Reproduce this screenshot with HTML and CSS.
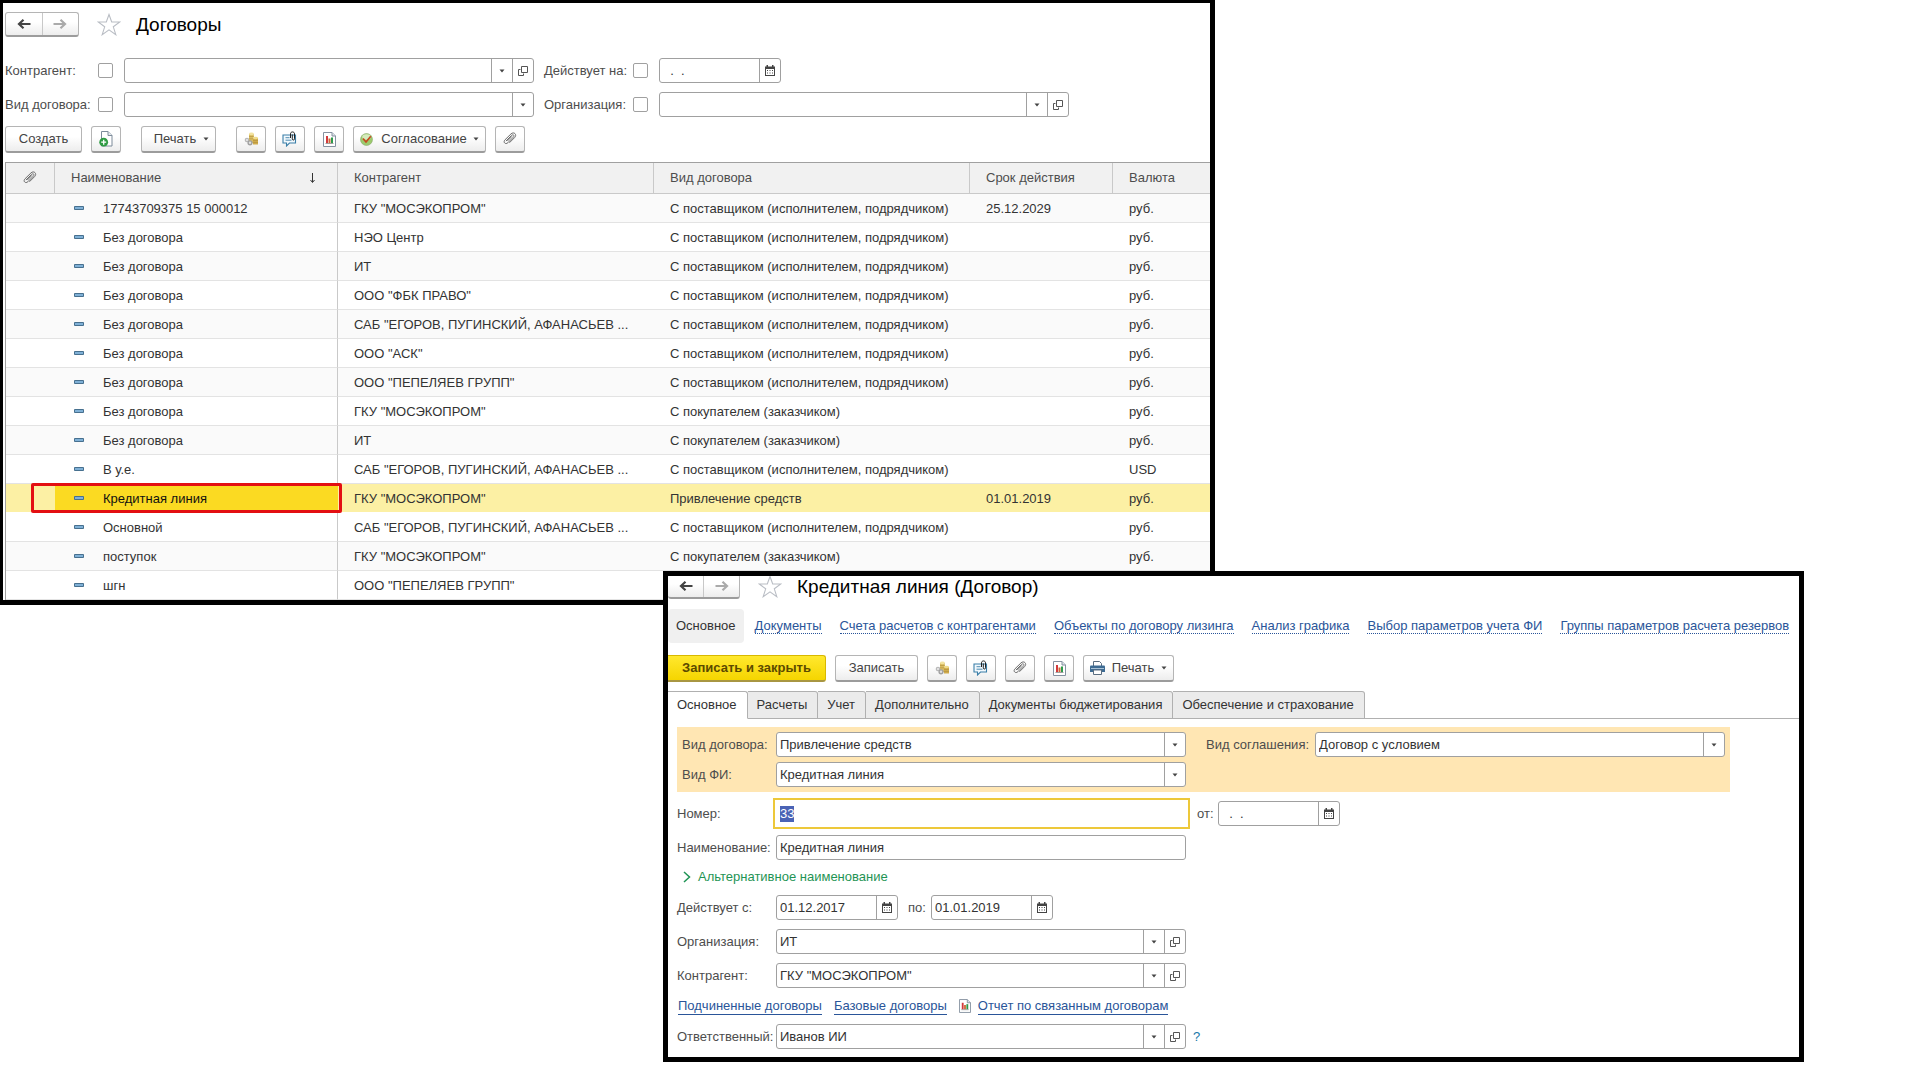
FILE: index.html
```html
<!DOCTYPE html>
<html lang="ru">
<head>
<meta charset="utf-8">
<title>Договоры</title>
<link rel="stylesheet" href="styles.css">
</head>
<body>
<svg class="sprite" aria-hidden="true">
  <symbol id="i-back" viewBox="0 0 14 10"><path d="M13.5 5H3M6.5 .8 2 5l4.500 4.200" fill="none" stroke="currentColor" stroke-width="2.200"/></symbol>
  <symbol id="i-fwd" viewBox="0 0 14 10"><path d="M.5 5H11M7.500 .8 12 5 7.500 9.200" fill="none" stroke="currentColor" stroke-width="2.200"/></symbol>
  <symbol id="i-star" viewBox="0 0 24 23"><path d="M12 1.500 14.700 9h8.100l-6.500 4.800 2.500 7.900L12 16.900l-6.800 4.800 2.500-7.900L1.200 9h8.100z" fill="none" stroke="#b9bdc4" stroke-width="1.100"/></symbol>
  <symbol id="i-caret" viewBox="0 0 6 4"><path d="M.5 .5h5L3 3.500z" fill="#444"/></symbol>
  <symbol id="i-open" viewBox="0 0 10 10"><path d="M3.500 .5h6v6h-6zM2.500 3.500h-2v6h5V7.500" fill="none" stroke="#555"/></symbol>
  <symbol id="i-cal" viewBox="0 0 10 11"><path d="M0 1.500h1.500V0H3v1.500h4V0h1.500v1.500H10V11H0z" fill="#444"/><path d="M1 4h8v6H1z" fill="#fff"/><path d="M2 5h1v1H2zM4.500 5h1v1h-1zM7 5h1v1H7zM2 7.500h1v1H2zM4.500 7.500h1v1h-1zM7 7.500h1v1H7z" fill="#444"/></symbol>
  <symbol id="i-clip" viewBox="0 0 14 14"><path d="M3.200 8.800 8.600 3.400c1.600-1.500 3.300.2 1.800 1.700l-5.500 5.600c-2.400 2.300-5.200-.5-2.900-2.900L7.900 2c3-2.900 6.600.7 3.700 3.600L6.700 10.500M4.700 8.700l4-4.100" fill="none" stroke="#6b6b6b" stroke-width="1" stroke-linecap="round"/></symbol>
  <symbol id="i-newdoc" viewBox="0 0 14 16"><path d="M2.500 .5h6.500l4 4v10.500H2.500z" fill="#fff" stroke="#7c8b9a"/><path d="M9 .5v4h4" fill="#e6ebef" stroke="#7c8b9a"/><circle cx="4.700" cy="11.200" r="4.400" fill="#2f9b43"/><path d="M4.700 8.700v5M2.200 11.200h5" stroke="#fff" stroke-width="1.300"/></symbol>
  <symbol id="i-coins" viewBox="0 0 15 14"><path d="M5 1.800h4.800V11H5z" fill="#d9bd62"/><ellipse cx="7.400" cy="1.900" rx="2.400" ry="1.300" fill="#f3e3a0"/><path d="M9 6h5v6.500H9z" fill="#cfab4c"/><ellipse cx="11.500" cy="6" rx="2.500" ry="1.300" fill="#f0dc8c"/><path d="M5 4.500h4.800M5 6.800h4M9 8.500h5M9 10.500h5" stroke="#b08f3c" stroke-width=".6"/><circle cx="3" cy="8" r="2.300" fill="#b9b9b9"/><circle cx="6" cy="10.800" r="2.600" fill="#a0a0a0"/><circle cx="6" cy="10.800" r="1.200" fill="#e0e0e0"/><circle cx="3" cy="8" r="1" fill="#eee"/></symbol>
  <symbol id="i-chat" viewBox="0 0 16 16"><path d="M1 4h12.500v8H7.500L4.500 15v-3H1z" fill="#f2f9fd" stroke="#3b7fa8" stroke-width="1.100"/><path d="M3.500 6.700h4M3.500 9.200h6" stroke="#3b7fa8" stroke-width=".9"/><path d="M8.500 7V2.800c0-2.500 4-2.500 4 0v5c0 1.700-2.200 1.700-2.200 0V3.500" fill="none" stroke="#222"/></symbol>
  <symbol id="i-report" viewBox="0 0 13 15"><path d="M.5 .5h8.500l3.500 3.500v10.500H.5z" fill="#fff" stroke="#8591a0"/><path d="M9 .5V4h3.500" fill="#dfe5ea" stroke="#8591a0"/><path d="M3 4h2v7H3z" fill="#d2393c"/><path d="M5.500 6.500h2V11h-2z" fill="#cf6a3a"/><path d="M8 5.500h2V11H8z" fill="#2c9a4b"/><path d="M2.500 11.500h8" stroke="#777" stroke-width=".7"/></symbol>
  <symbol id="i-ok" viewBox="0 0 13 13"><circle cx="6.500" cy="6.500" r="6" fill="#9ccb6d" stroke="#8aa86d" stroke-width=".6"/><ellipse cx="6.500" cy="4" rx="4.300" ry="2.700" fill="#d5ebbd"/><path d="M3 5.500 6 9 10.800 3.200" fill="none" stroke="#c5481f" stroke-width="1.700"/></symbol>
  <symbol id="i-print" viewBox="0 0 15 14"><path d="M3.500 5V.5h6l2 2V5" fill="#fff" stroke="#5a6d80"/><path d="M1 4.500h13q1 0 1 1V11H0V5.500q0-1 1-1z" fill="#3d6b93"/><path d="M1 7.500h13" stroke="#a9c3d8"/><path d="M3.500 9h8v4.500h-8z" fill="#fff" stroke="#5a6d80"/></symbol>
  <symbol id="i-item" viewBox="0 0 10 4"><path d="M.5 .5h9v3h-9z" fill="#7fb0d6" stroke="#47708f"/></symbol>
  <symbol id="i-sort" viewBox="0 0 7 11"><path d="M3.500 0v9M1.500 7l2 2.500 2-2.500" fill="none" stroke="#333"/></symbol>
  <symbol id="i-chev" viewBox="0 0 8 12"><path d="M1 1l5.500 5L1 11" fill="none" stroke="#1f9455" stroke-width="1.500"/></symbol>
</svg>

<main class="desktop">
  <section class="window window-list">
    <header class="titlebar">
      <div class="history">
        <button type="button" aria-label="Назад"><svg width="14" height="10"><use href="#i-back"/></svg></button>
        <button type="button" aria-label="Вперед" disabled><svg width="14" height="10"><use href="#i-fwd"/></svg></button>
      </div>
      <svg class="star" width="24" height="23"><use href="#i-star"/></svg>
      <h1>Договоры</h1>
    </header>

    <form class="filters">
      <label for="f-agent">Контрагент:</label>
      <input type="checkbox" aria-label="Отбор по контрагенту">
      <div class="field"><select id="f-agent"><option></option></select><span class="cell"><svg width="6" height="4"><use href="#i-caret"/></svg></span><button type="button" class="cell" aria-label="Открыть"><svg width="10" height="10"><use href="#i-open"/></svg></button></div>
      <label for="f-date">Действует на:</label>
      <input type="checkbox" aria-label="Отбор по дате">
      <div class="field date"><input id="f-date" type="text" value="  .  ."><button type="button" class="cell" aria-label="Календарь"><svg width="10" height="11"><use href="#i-cal"/></svg></button></div>

      <label for="f-kind">Вид договора:</label>
      <input type="checkbox" aria-label="Отбор по виду договора">
      <div class="field"><select id="f-kind"><option></option></select><span class="cell"><svg width="6" height="4"><use href="#i-caret"/></svg></span></div>
      <label for="f-org">Организация:</label>
      <input type="checkbox" aria-label="Отбор по организации">
      <div class="field"><select id="f-org"><option></option></select><span class="cell"><svg width="6" height="4"><use href="#i-caret"/></svg></span><button type="button" class="cell" aria-label="Открыть"><svg width="10" height="10"><use href="#i-open"/></svg></button></div>
    </form>

    <div class="toolbar">
      <button type="button" class="btn btn-create">Создать</button>
      <button type="button" class="btn icon gap-after" aria-label="Создать копированием"><svg width="14" height="16"><use href="#i-newdoc"/></svg></button>
      <button type="button" class="btn btn-menu gap-after">Печать<svg width="6" height="4"><use href="#i-caret"/></svg></button>
      <button type="button" class="btn icon" aria-label="Расчеты"><svg width="15" height="14"><use href="#i-coins"/></svg></button>
      <button type="button" class="btn icon" aria-label="Обсуждение"><svg width="16" height="16"><use href="#i-chat"/></svg></button>
      <button type="button" class="btn icon" aria-label="Отчет"><svg width="13" height="15"><use href="#i-report"/></svg></button>
      <button type="button" class="btn btn-approve"><svg width="13" height="13"><use href="#i-ok"/></svg><span>Согласование</span><svg width="6" height="4"><use href="#i-caret"/></svg></button>
      <button type="button" class="btn icon" aria-label="Файлы"><svg width="14" height="14"><use href="#i-clip"/></svg></button>
    </div>

    <table class="grid">
      <colgroup><col class="c-clip"><col class="c-name"><col class="c-agent"><col class="c-kind"><col class="c-term"><col></colgroup>
      <thead>
        <tr><th class="clip"><svg width="14" height="14"><use href="#i-clip"/></svg></th><th><div class="sorted">Наименование<svg width="7" height="11"><use href="#i-sort"/></svg></div></th><th>Контрагент</th><th>Вид договора</th><th>Срок действия</th><th>Валюта</th></tr>
      </thead>
      <tbody>
        <tr><td></td><td class="name"><svg width="10" height="4"><use href="#i-item"/></svg>17743709375 15 000012</td><td>ГКУ "МОСЭКОПРОМ"</td><td>С поставщиком (исполнителем, подрядчиком)</td><td>25.12.2029</td><td>руб.</td></tr>
        <tr><td></td><td class="name"><svg width="10" height="4"><use href="#i-item"/></svg>Без договора</td><td>НЭО Центр</td><td>С поставщиком (исполнителем, подрядчиком)</td><td></td><td>руб.</td></tr>
        <tr><td></td><td class="name"><svg width="10" height="4"><use href="#i-item"/></svg>Без договора</td><td>ИТ</td><td>С поставщиком (исполнителем, подрядчиком)</td><td></td><td>руб.</td></tr>
        <tr><td></td><td class="name"><svg width="10" height="4"><use href="#i-item"/></svg>Без договора</td><td>ООО "ФБК ПРАВО"</td><td>С поставщиком (исполнителем, подрядчиком)</td><td></td><td>руб.</td></tr>
        <tr><td></td><td class="name"><svg width="10" height="4"><use href="#i-item"/></svg>Без договора</td><td>САБ "ЕГОРОВ, ПУГИНСКИЙ, АФАНАСЬЕВ ...</td><td>С поставщиком (исполнителем, подрядчиком)</td><td></td><td>руб.</td></tr>
        <tr><td></td><td class="name"><svg width="10" height="4"><use href="#i-item"/></svg>Без договора</td><td>ООО "АСК"</td><td>С поставщиком (исполнителем, подрядчиком)</td><td></td><td>руб.</td></tr>
        <tr><td></td><td class="name"><svg width="10" height="4"><use href="#i-item"/></svg>Без договора</td><td>ООО "ПЕПЕЛЯЕВ ГРУПП"</td><td>С поставщиком (исполнителем, подрядчиком)</td><td></td><td>руб.</td></tr>
        <tr><td></td><td class="name"><svg width="10" height="4"><use href="#i-item"/></svg>Без договора</td><td>ГКУ "МОСЭКОПРОМ"</td><td>С покупателем (заказчиком)</td><td></td><td>руб.</td></tr>
        <tr><td></td><td class="name"><svg width="10" height="4"><use href="#i-item"/></svg>Без договора</td><td>ИТ</td><td>С покупателем (заказчиком)</td><td></td><td>руб.</td></tr>
        <tr><td></td><td class="name"><svg width="10" height="4"><use href="#i-item"/></svg>В у.е.</td><td>САБ "ЕГОРОВ, ПУГИНСКИЙ, АФАНАСЬЕВ ...</td><td>С поставщиком (исполнителем, подрядчиком)</td><td></td><td>USD</td></tr>
        <tr class="selected"><td></td><td class="name"><svg width="10" height="4"><use href="#i-item"/></svg>Кредитная линия<span class="marker"></span></td><td>ГКУ "МОСЭКОПРОМ"</td><td>Привлечение средств</td><td>01.01.2019</td><td>руб.</td></tr>
        <tr><td></td><td class="name"><svg width="10" height="4"><use href="#i-item"/></svg>Основной</td><td>САБ "ЕГОРОВ, ПУГИНСКИЙ, АФАНАСЬЕВ ...</td><td>С поставщиком (исполнителем, подрядчиком)</td><td></td><td>руб.</td></tr>
        <tr><td></td><td class="name"><svg width="10" height="4"><use href="#i-item"/></svg>поступок</td><td>ГКУ "МОСЭКОПРОМ"</td><td>С покупателем (заказчиком)</td><td></td><td>руб.</td></tr>
        <tr><td></td><td class="name"><svg width="10" height="4"><use href="#i-item"/></svg>шгн</td><td>ООО "ПЕПЕЛЯЕВ ГРУПП"</td><td></td><td></td><td></td></tr>
      </tbody>
    </table>
  </section>

  <section class="window window-card">
    <header class="titlebar">
      <div class="history">
        <button type="button" aria-label="Назад"><svg width="14" height="10"><use href="#i-back"/></svg></button>
        <button type="button" aria-label="Вперед" disabled><svg width="14" height="10"><use href="#i-fwd"/></svg></button>
      </div>
      <svg class="star" width="24" height="23"><use href="#i-star"/></svg>
      <h1>Кредитная линия (Договор)</h1>
    </header>

    <nav class="sections">
      <span class="current">Основное</span>
      <a href="#">Документы</a>
      <a href="#">Счета расчетов с контрагентами</a>
      <a href="#">Объекты по договору лизинга</a>
      <a href="#">Анализ графика</a>
      <a href="#">Выбор параметров учета ФИ</a>
      <a href="#">Группы параметров расчета резервов</a>
    </nav>

    <div class="toolbar">
      <button type="button" class="btn btn-primary">Записать и закрыть</button>
      <button type="button" class="btn btn-save">Записать</button>
      <button type="button" class="btn icon" aria-label="Расчеты"><svg width="15" height="14"><use href="#i-coins"/></svg></button>
      <button type="button" class="btn icon" aria-label="Обсуждение"><svg width="16" height="16"><use href="#i-chat"/></svg></button>
      <button type="button" class="btn icon" aria-label="Файлы"><svg width="14" height="14"><use href="#i-clip"/></svg></button>
      <button type="button" class="btn icon" aria-label="Отчет"><svg width="13" height="15"><use href="#i-report"/></svg></button>
      <button type="button" class="btn btn-print"><svg width="15" height="14"><use href="#i-print"/></svg><span>Печать</span><svg width="6" height="4"><use href="#i-caret"/></svg></button>
    </div>

    <div class="tabs" role="tablist">
      <button type="button" role="tab" aria-selected="true">Основное</button>
      <button type="button" role="tab">Расчеты</button>
      <button type="button" role="tab">Учет</button>
      <button type="button" role="tab">Дополнительно</button>
      <button type="button" role="tab">Документы бюджетирования</button>
      <button type="button" role="tab">Обеспечение и страхование</button>
    </div>

    <form class="card">
      <div class="kinds">
        <label for="kind">Вид договора:</label>
        <div class="field"><select id="kind"><option>Привлечение средств</option></select><span class="cell"><svg width="6" height="4"><use href="#i-caret"/></svg></span></div>
        <label for="deal" class="second">Вид соглашения:</label>
        <div class="field"><select id="deal"><option>Договор с условием</option></select><span class="cell"><svg width="6" height="4"><use href="#i-caret"/></svg></span></div>
        <label for="fi">Вид ФИ:</label>
        <div class="field"><select id="fi"><option>Кредитная линия</option></select><span class="cell"><svg width="6" height="4"><use href="#i-caret"/></svg></span></div>
      </div>

      <div class="row">
        <label for="number">Номер:</label>
        <div class="field focused"><input id="number" type="text" value="33"></div>
        <label for="from" class="short">от:</label>
        <div class="field date"><input id="from" type="text" value="  .  ."><button type="button" class="cell" aria-label="Календарь"><svg width="10" height="11"><use href="#i-cal"/></svg></button></div>
      </div>
      <div class="row">
        <label for="title">Наименование:</label>
        <div class="field"><input id="title" type="text" value="Кредитная линия"></div>
      </div>
      <button type="button" class="expander"><svg width="8" height="12"><use href="#i-chev"/></svg>Альтернативное наименование</button>
      <div class="row">
        <label for="start">Действует с:</label>
        <div class="field date"><input id="start" type="text" value="01.12.2017"><button type="button" class="cell" aria-label="Календарь"><svg width="10" height="11"><use href="#i-cal"/></svg></button></div>
        <label for="end" class="short until">по:</label>
        <div class="field date"><input id="end" type="text" value="01.01.2019"><button type="button" class="cell" aria-label="Календарь"><svg width="10" height="11"><use href="#i-cal"/></svg></button></div>
      </div>
      <div class="row">
        <label for="org">Организация:</label>
        <div class="field"><select id="org"><option>ИТ</option></select><span class="cell"><svg width="6" height="4"><use href="#i-caret"/></svg></span><button type="button" class="cell" aria-label="Открыть"><svg width="10" height="10"><use href="#i-open"/></svg></button></div>
      </div>
      <div class="row">
        <label for="agent">Контрагент:</label>
        <div class="field"><select id="agent"><option>ГКУ "МОСЭКОПРОМ"</option></select><span class="cell"><svg width="6" height="4"><use href="#i-caret"/></svg></span><button type="button" class="cell" aria-label="Открыть"><svg width="10" height="10"><use href="#i-open"/></svg></button></div>
      </div>
      <div class="links">
        <a href="#">Подчиненные договоры</a>
        <a href="#">Базовые договоры</a>
        <svg width="12" height="14"><use href="#i-report"/></svg>
        <a href="#">Отчет по связанным договорам</a>
      </div>
      <div class="row">
        <label for="owner">Ответственный:</label>
        <div class="field"><select id="owner"><option>Иванов ИИ</option></select><span class="cell"><svg width="6" height="4"><use href="#i-caret"/></svg></span><button type="button" class="cell" aria-label="Открыть"><svg width="10" height="10"><use href="#i-open"/></svg></button></div>
        <a href="#" class="help">?</a>
      </div>
    </form>
  </section>
</main>
<script src="app.js"></script>
</body>
</html>
```
FILE: styles.css
```css
* { box-sizing: border-box; }

body {
  margin: 0;
  background: #fff;
  color: #333;
  font: 13px/16px "Liberation Sans", Arial, sans-serif;
}

button, input, select { font: inherit; color: inherit; margin: 0; }
button { padding: 0; background: none; border: 0; }
svg { display: block; flex: none; }
.sprite { position: absolute; width: 0; height: 0; }

.desktop { position: relative; min-height: 100vh; }

/* Windows */
.window { position: absolute; background: #fff; border: 5px solid #000; overflow: hidden; }
.window-list { left: 0; right: 705px; top: 0; border-width: 3px 5px 5px 3px; padding: 9px 0 0 2px; }
.window-card { left: 663px; right: 116px; top: 571px; }

.titlebar { display: flex; align-items: center; height: 25px; }
.window-card .titlebar { margin-top: -2px; }
.history { display: flex; width: 74px; height: 25px; border: 1px solid #b5b5b5; border-bottom: 2px solid #9c9c9c; border-radius: 3px; background: linear-gradient(#fff 40%, #ededed); }
.window-card .history { width: 72px; border-left: 0; }
.history button { flex: 1; display: flex; align-items: center; justify-content: center; color: #444; }
.history button + button { border-left: 1px solid #c8c8c8; color: #aaa; }
.star { margin: 0 15px 0 18px; }
h1 { margin: 0; padding-top: 1px; font-size: 19px; line-height: 24px; font-weight: 400; color: #000; white-space: nowrap; }

/* Fields */
label { color: #4d4d4d; white-space: nowrap; }
.field { display: flex; height: 25px; width: 410px; border: 1px solid #a0a0a0; border-radius: 3px; background: #fff; overflow: hidden; }
.field.date { width: 122px; }
.field input, .field select { flex: 1; min-width: 0; padding: 0 3px; border: 0; outline: 0; background: none; appearance: none; white-space: pre; }
.cell { display: flex; flex: none; align-items: center; justify-content: center; width: 21px; border-left: 1px solid #a0a0a0; }
.field.focused { width: 417px; height: 31px; margin-left: -3px; border: 2px solid #edc83a; border-radius: 0; padding-left: 2px; }
.field.focused + label { margin-left: 7px; }
::selection { background: #4a63b5; color: #fff; }

input[type="checkbox"] { appearance: none; width: 15px; height: 15px; border: 1px solid #a0a0a0; border-radius: 2px; background: #fff; }

.filters { display: grid; grid-template-columns: 93px 26px 410px 99px 26px 410px; row-gap: 9px; align-items: center; margin-top: 21px; }
.filters label:nth-of-type(even) { padding-left: 10px; }

/* Toolbars */
.toolbar { display: flex; gap: 9px; margin-top: 9px; }
.btn { display: flex; align-items: center; justify-content: center; height: 27px; border: 1px solid #b5b5b5; border-bottom: 2px solid #9c9c9c; border-radius: 3px; background: linear-gradient(#fff 40%, #ededed); color: #444; white-space: nowrap; }
.btn.icon { width: 30px; }
.gap-after { margin-right: 11px; }
.btn-create { width: 77px; }
.btn-menu { width: 75px; gap: 7px; padding-left: 6px; }
.btn-approve { width: 133px; gap: 6px; }
.btn-approve span { margin-left: 2px; }
.btn-primary { width: 158px; border: 1px solid #d8b800; border-bottom: 2px solid #a89642; border-left: 0; border-radius: 0 3px 3px 0; background: linear-gradient(#ffe82e, #f5d500); color: #5b4a00; font-weight: 700; }
.btn-save { width: 83px; }
.btn-print { width: 91px; gap: 7px; }

/* Contract list */
.grid { width: 100%; margin-top: 9px; table-layout: fixed; border-collapse: separate; border-spacing: 0; border-top: 1px solid #a0a0a0; border-left: 1px solid #a0a0a0; }
.c-clip { width: 49px; }
.c-name { width: 283px; }
.c-agent, .c-kind { width: 316px; }
.c-term { width: 143px; }
.grid th, .grid td { padding: 0 16px; text-align: left; font-weight: 400; white-space: nowrap; overflow: hidden; }
.grid th { height: 31px; background: #f1f1f1; color: #4d4d4d; border-right: 1px solid #c9c9c9; border-bottom: 1px solid #c9c9c9; }
.grid th:last-child { border-right: 0; }
.grid th.clip { padding: 0 17px; }
.sorted { display: flex; justify-content: space-between; align-items: center; padding-right: 5px; }
.grid td { height: 29px; padding-top: 1px; border-bottom: 1px solid #e3e3e3; }
.grid tbody tr:nth-child(odd) { background: #fafafa; }
.grid .name { position: relative; padding-left: 48px; border-right: 1px solid #c9c9c9; }
.name svg { float: left; margin: 5px 0 0 -29px; }
.grid tbody tr.selected { background: #fcf0a4; }
.grid .selected td { border-color: #fff; }
.grid .selected .name { background: #fbda22; overflow: visible; border-color: #fbda22; color: #111; }
.marker { position: absolute; top: -1px; right: -5px; bottom: -1px; left: -24px; border: 3px solid #e30f12; border-radius: 2px; }

/* Contract card */
.sections { display: flex; gap: 18px; align-items: center; height: 34px; margin-top: 10px; white-space: nowrap; }
.sections .current { padding: 9px 8px; border-radius: 4px; background: #f0f0f0; margin-right: -7px; }
a { color: #2a5599; text-decoration: none; }
.sections a { border-bottom: 1px dotted #2a5599; line-height: 15px; }
.window-card .toolbar { margin-top: 12px; }

.tabs { display: flex; margin-top: 9px; height: 28px; border-bottom: 1px solid #b0b0b0; }
.tabs button { height: 28px; padding: 0 10px 0 9px; border: 1px solid #b0b0b0; border-left: 0; background: #ebebeb; border-radius: 0 3px 0 0; white-space: nowrap; }
.tabs [aria-selected] { background: #fff; border-bottom-color: #fff; }

.card { padding: 8px 0 8px 9px; }
.kinds { display: grid; grid-template-columns: 94px 410px 129px 410px; row-gap: 5px; align-items: center; margin: 0 69px 6px 0; padding: 5px; background: #ffe6b3; }
.kinds .second { padding-left: 20px; }
.row { display: flex; align-items: center; margin-bottom: 9px; }
.row > label:first-child { width: 99px; }
.row > .short { width: 21px; }
.row > .until { width: 33px; padding-left: 10px; }
.row:has(.focused) { margin-bottom: 6px; }
.expander { display: flex; align-items: center; gap: 7px; height: 16px; margin: 0 0 10px 6px; color: #1f9455; }
.links { display: flex; gap: 12px; align-items: center; height: 18px; margin-bottom: 9px; padding-left: 1px; }
.links a { border-bottom: 1px solid #2a5599; }
.links svg + a { margin-left: -5px; }
.help { margin-left: 7px; color: #1878a8; font-size: 13px; }
.card .row:last-child { margin-bottom: 0; }
```
FILE: app.js
```js
const number = document.getElementById('number');
number.focus();
number.select();
```
